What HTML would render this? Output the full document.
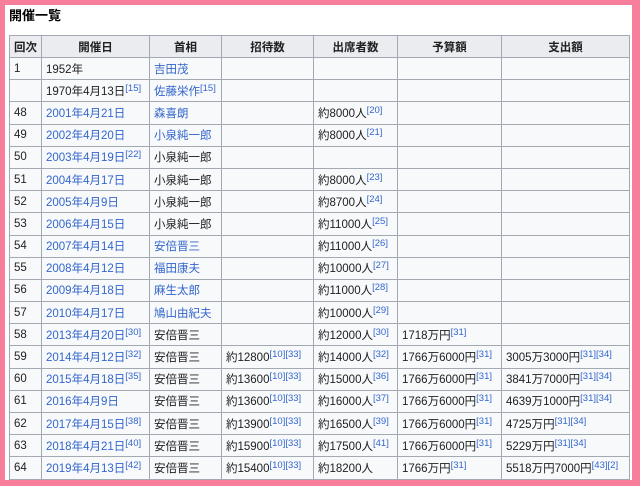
<!DOCTYPE html>
<html><head><meta charset="utf-8"><style>
html,body{margin:0;padding:0;}
body{width:640px;height:486px;background:#f77f9c;position:relative;overflow:hidden;font-family:"Liberation Sans","Noto Sans CJK JP",sans-serif;}
#w{position:absolute;left:5px;top:5px;width:627px;height:475px;background:#fff;overflow:hidden;}
h3{position:absolute;left:4px;top:3px;margin:0;font-size:13px;font-weight:bold;color:#000;line-height:16px;}
table{position:absolute;left:4px;top:30px;border-collapse:collapse;font-size:11.5px;color:#202122;table-layout:fixed;}
td,th{border:1px solid #a2a9b1;background:#f8f9fa;height:21.2px;padding:0 4px;white-space:nowrap;overflow:hidden;}
th{background:#eaecf0;font-weight:bold;text-align:center;height:21px;}
a{color:#3366cc;text-decoration:none;}
sup{font-size:9.5px;color:#3366cc;vertical-align:4px;line-height:0;}
</style></head><body><div id="w">
<h3>開催一覧</h3>
<table>
<colgroup><col style="width:32px"><col style="width:108px"><col style="width:72px"><col style="width:92px"><col style="width:84px"><col style="width:104px"><col style="width:128px"></colgroup>
<tr><th>回次</th><th>開催日</th><th>首相</th><th>招待数</th><th>出席者数</th><th>予算額</th><th>支出額</th></tr>
<tr><td>1</td><td>1952年</td><td><a>吉田茂</a></td><td></td><td></td><td></td><td></td></tr>
<tr><td></td><td>1970年4月13日<sup>[15]</sup></td><td><a>佐藤栄作</a><sup>[15]</sup></td><td></td><td></td><td></td><td></td></tr>
<tr><td>48</td><td><a>2001年4月21日</a></td><td><a>森喜朗</a></td><td></td><td>約8000人<sup>[20]</sup></td><td></td><td></td></tr>
<tr><td>49</td><td><a>2002年4月20日</a></td><td><a>小泉純一郎</a></td><td></td><td>約8000人<sup>[21]</sup></td><td></td><td></td></tr>
<tr><td>50</td><td><a>2003年4月19日</a><sup>[22]</sup></td><td>小泉純一郎</td><td></td><td></td><td></td><td></td></tr>
<tr><td>51</td><td><a>2004年4月17日</a></td><td>小泉純一郎</td><td></td><td>約8000人<sup>[23]</sup></td><td></td><td></td></tr>
<tr><td>52</td><td><a>2005年4月9日</a></td><td>小泉純一郎</td><td></td><td>約8700人<sup>[24]</sup></td><td></td><td></td></tr>
<tr><td>53</td><td><a>2006年4月15日</a></td><td>小泉純一郎</td><td></td><td>約11000人<sup>[25]</sup></td><td></td><td></td></tr>
<tr><td>54</td><td><a>2007年4月14日</a></td><td><a>安倍晋三</a></td><td></td><td>約11000人<sup>[26]</sup></td><td></td><td></td></tr>
<tr><td>55</td><td><a>2008年4月12日</a></td><td><a>福田康夫</a></td><td></td><td>約10000人<sup>[27]</sup></td><td></td><td></td></tr>
<tr><td>56</td><td><a>2009年4月18日</a></td><td><a>麻生太郎</a></td><td></td><td>約11000人<sup>[28]</sup></td><td></td><td></td></tr>
<tr><td>57</td><td><a>2010年4月17日</a></td><td><a>鳩山由紀夫</a></td><td></td><td>約10000人<sup>[29]</sup></td><td></td><td></td></tr>
<tr><td>58</td><td><a>2013年4月20日</a><sup>[30]</sup></td><td>安倍晋三</td><td></td><td>約12000人<sup>[30]</sup></td><td>1718万円<sup>[31]</sup></td><td></td></tr>
<tr><td>59</td><td><a>2014年4月12日</a><sup>[32]</sup></td><td>安倍晋三</td><td>約12800<sup>[10][33]</sup></td><td>約14000人<sup>[32]</sup></td><td>1766万6000円<sup>[31]</sup></td><td>3005万3000円<sup>[31][34]</sup></td></tr>
<tr><td>60</td><td><a>2015年4月18日</a><sup>[35]</sup></td><td>安倍晋三</td><td>約13600<sup>[10][33]</sup></td><td>約15000人<sup>[36]</sup></td><td>1766万6000円<sup>[31]</sup></td><td>3841万7000円<sup>[31][34]</sup></td></tr>
<tr><td>61</td><td><a>2016年4月9日</a></td><td>安倍晋三</td><td>約13600<sup>[10][33]</sup></td><td>約16000人<sup>[37]</sup></td><td>1766万6000円<sup>[31]</sup></td><td>4639万1000円<sup>[31][34]</sup></td></tr>
<tr><td>62</td><td><a>2017年4月15日</a><sup>[38]</sup></td><td>安倍晋三</td><td>約13900<sup>[10][33]</sup></td><td>約16500人<sup>[39]</sup></td><td>1766万6000円<sup>[31]</sup></td><td>4725万円<sup>[31][34]</sup></td></tr>
<tr><td>63</td><td><a>2018年4月21日</a><sup>[40]</sup></td><td>安倍晋三</td><td>約15900<sup>[10][33]</sup></td><td>約17500人<sup>[41]</sup></td><td>1766万6000円<sup>[31]</sup></td><td>5229万円<sup>[31][34]</sup></td></tr>
<tr><td>64</td><td><a>2019年4月13日</a><sup>[42]</sup></td><td>安倍晋三</td><td>約15400<sup>[10][33]</sup></td><td>約18200人</td><td>1766万円<sup>[31]</sup></td><td>5518万円7000円<sup>[43][2]</sup></td></tr>
<tr><td></td><td></td><td></td><td></td><td></td><td></td><td></td></tr>
</table>
</div></body></html>
